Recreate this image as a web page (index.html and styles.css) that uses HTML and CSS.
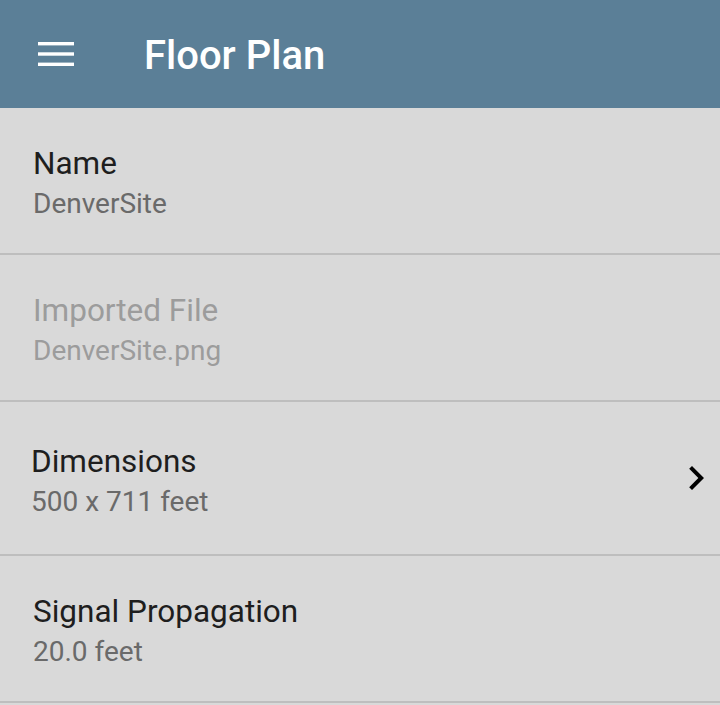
FILE: index.html
```html
<!DOCTYPE html>
<html>
<head>
<meta charset="utf-8">
<link rel="stylesheet" href="styles.css">
</head>
<body>
<header class="appbar">
  <button class="menu" aria-label="Menu">
    <svg width="36" height="24" viewBox="0 0 36 24"><rect x="0" y="0" width="36" height="3.4" fill="#fff"/><rect x="0" y="10.3" width="36" height="3.4" fill="#fff"/><rect x="0" y="20.6" width="36" height="3.4" fill="#fff"/></svg>
  </button>
  <h1 class="title">Floor Plan</h1>
</header>
<main class="list">
  <div class="row">
    <div class="text">
      <div class="label">Name</div>
      <div class="value">DenverSite</div>
    </div>
  </div>
  <div class="row disabled">
    <div class="text">
      <div class="label">Imported File</div>
      <div class="value">DenverSite.png</div>
    </div>
  </div>
  <div class="row tall nav">
    <div class="text">
      <div class="label">Dimensions</div>
      <div class="value">500 x 711 feet</div>
    </div>
    <svg class="chevron" width="48" height="48" viewBox="0 0 24 24"><path d="M10 6L8.59 7.41 13.17 12l-4.58 4.59L10 18l6-6z" fill="#000"/></svg>
  </div>
  <div class="row">
    <div class="text">
      <div class="label">Signal Propagation</div>
      <div class="value">20.0 feet</div>
    </div>
  </div>
</main>
</body>
</html>
```
FILE: styles.css
```css
html, body {
  margin: 0;
  padding: 0;
  background: #d9d9d9;
  font-family: Roboto, "Noto Sans", sans-serif;
}
.appbar {
  height: 108px;
  background: #5b7f97;
  display: flex;
  align-items: center;
}
.menu {
  border: 0;
  background: none;
  padding: 0;
  margin: 0 0 0 38px;
  width: 36px;
  height: 24px;
  display: flex;
}
.title {
  margin: 4px 0 0 70px;
  color: #fff;
  font-size: 40px;
  font-weight: 500;
  line-height: 1;
}
.row {
  height: 145px;
  border-bottom: 2px solid #bebebe;
  display: flex;
  align-items: flex-start;
  box-sizing: content-box;
}
.row.tall {
  height: 152px;
}
.text {
  padding: 38px 0 0 33px;
  flex: 1;
}
.row.tall .text {
  padding-top: 42px;
  padding-left: 31px;
}
.label {
  font-size: 31.5px;
  line-height: 36px;
  color: #1e1e1e;
}
.value {
  font-size: 28px;
  line-height: 44px;
  color: #6a6a6a;
}
.disabled .label,
.disabled .value {
  color: #9c9c9c;
}
.chevron {
  align-self: center;
}
```
